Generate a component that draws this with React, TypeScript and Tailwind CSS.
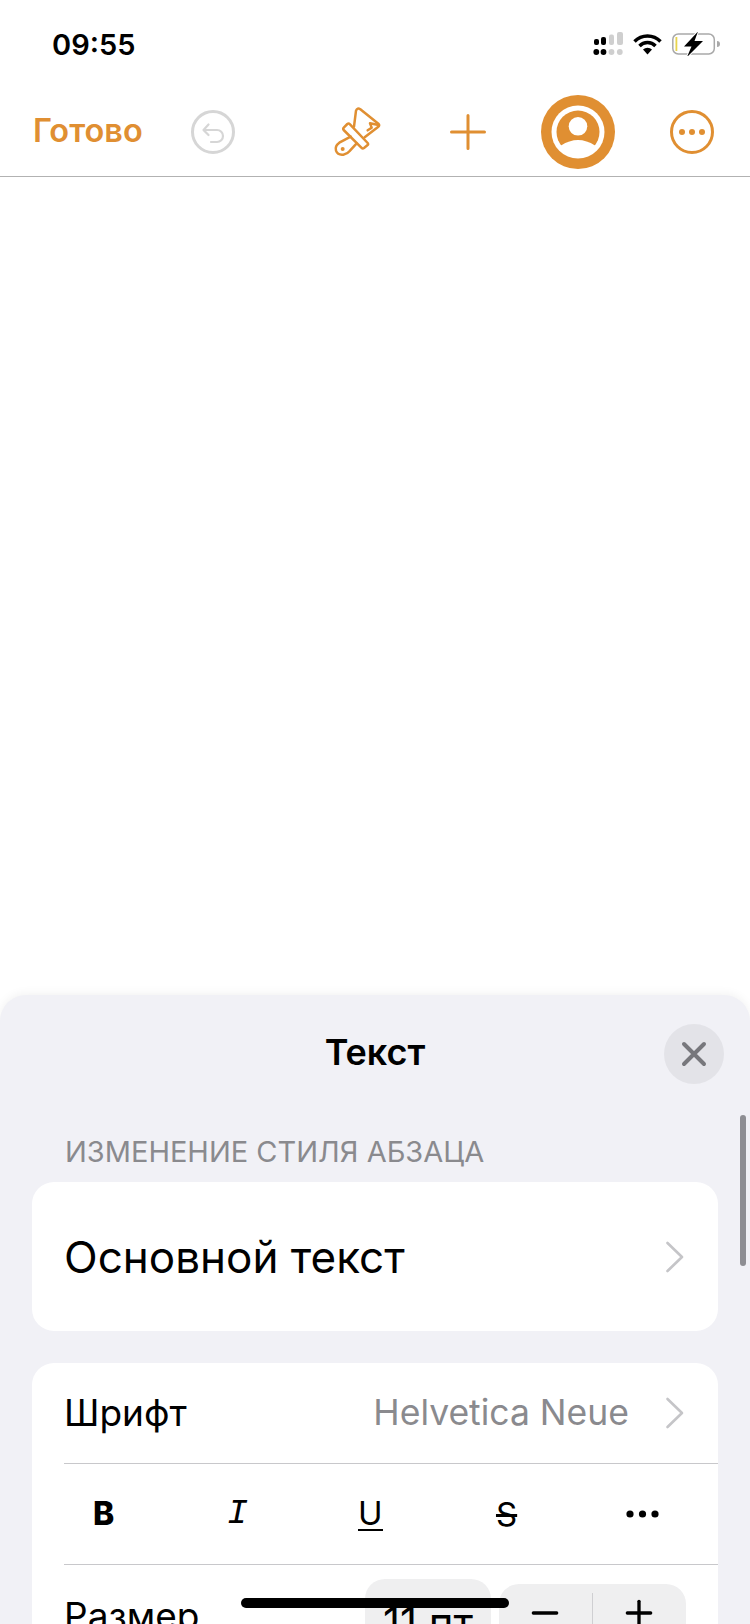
import { Minus, Plus } from 'lucide-react';

const orange = '#e08f32';

function Chevron() {
    return (
        <svg width="20" height="32" viewBox="0 0 20 32" fill="none" stroke="#c5c5c8" strokeWidth="2.6" strokeLinecap="round" strokeLinejoin="round">
            <path d="M2.5 2 L17 16 L2.5 30" />
        </svg>
    );
}

function StatusIcons() {
    return (
        <div className="flex items-center">
            <svg width="30" height="24" viewBox="0 0 30 24">
                <rect x="1" y="7" width="5" height="6" rx="2" fill="#000" />
                <rect x="8" y="5" width="5" height="8" rx="2" fill="#000" />
                <rect x="16" y="2.5" width="5" height="10.5" rx="2" fill="#cfcfcf" />
                <rect x="24" y="0" width="6" height="13" rx="2" fill="#cfcfcf" />
                <circle cx="3.3" cy="20" r="2.9" fill="#000" />
                <circle cx="10.5" cy="20" r="2.9" fill="#000" />
                <circle cx="18.5" cy="20" r="2.9" fill="#cfcfcf" />
                <circle cx="26.8" cy="20" r="2.9" fill="#cfcfcf" />
            </svg>
            <svg className="ml-[10px]" width="29" height="21" viewBox="0 0 29 21" fill="none" stroke="#000" strokeWidth="3.4">
                <path d="M1.5 7.5 A18 18 0 0 1 27.5 7.5" />
                <path d="M6.5 12 A11 11 0 0 1 22.5 12" />
                <path d="M14.5 20.5 L10 15.5 A6.5 6.5 0 0 1 19 15.5 Z" fill="#000" stroke="none" />
            </svg>
            <svg className="ml-[10px]" width="48" height="24" viewBox="0 0 48 24" fill="none">
                <rect x="0.8" y="2" width="41.5" height="20" rx="5.5" stroke="#a9a9a9" strokeWidth="1.5" />
                <rect x="3.5" y="5" width="1.8" height="14" fill="#e8d44d" />
                <path d="M45 9 a3 3 0 0 1 0 6 Z" fill="#a9a9a9" />
                <path d="M12 14.5 L26 -0.5 L22.5 9 H31 L15 25 L19.5 14.5 Z" fill="#fff" stroke="#fff" strokeWidth="2" />
                <path d="M12 14.5 L26 -0.5 L22.5 9 H31 L15 25 L19.5 14.5 Z" fill="#000" />
            </svg>
        </div>
    );
}

function UndoIcon() {
    return (
        <svg width="46" height="46" viewBox="0 0 46 46" fill="none" stroke="#d6d6d6" strokeWidth="3" strokeLinecap="round" strokeLinejoin="round">
            <circle cx="23" cy="23" r="20.5" />
            <path d="M18.5 15.5 L13.5 21 L18.5 26" strokeWidth="2.2" />
            <path d="M14 21 H27 a6 6 0 0 1 0 12 H21" strokeWidth="2.2" />
        </svg>
    );
}

function BrushIcon() {
    return (
        <svg width="80" height="75" viewBox="0 0 240 225" fill="none" stroke={orange} strokeWidth="7.5" strokeLinecap="round" strokeLinejoin="round">
            <path d="M102 98 L108 50 Q112 40 121 46 L176 90 Q180 95 174 99 L134 130" />
            <path d="M172 92 L150 88 L155 101 L143 109" />
            <path d="M72 100 L82 90 Q86 87 90 91 L143 147 Q146 151 142 154 L132 162 Q128 165 124 161 L71 108 Q68 104 72 100 Z" />
            <path d="M92 128 L58 146 Q44 156 48 170 Q53 184 70 182 Q82 180 90 170 L110 148" />
            <circle cx="68" cy="165" r="6" fill={orange} stroke="none" />
        </svg>
    );
}

function PlusIcon() {
    return (
        <svg width="36" height="36" viewBox="0 0 36 36" fill="none" stroke={orange} strokeWidth="3" strokeLinecap="round">
            <path d="M18 1.5 V34.5 M1.5 18 H34.5" />
        </svg>
    );
}

function AvatarIcon() {
    return (
        <svg width="74" height="74" viewBox="0 0 74 74">
            <circle cx="37" cy="37" r="37" fill={orange} />
            <circle cx="37" cy="37" r="26.5" fill="#fff" />
            <circle cx="37" cy="37" r="21.5" fill={orange} />
            <circle cx="37" cy="31.3" r="9.3" fill="#fff" />
            <path d="M20 50.5 Q37 39.5 54 50.5 L54 56 L37 62 L20 56 Z" fill="#fff" />
        </svg>
    );
}

function MoreIcon() {
    return (
        <svg width="46" height="46" viewBox="0 0 46 46" fill="none" stroke={orange} strokeWidth="3">
            <circle cx="23" cy="23" r="20.5" />
            <circle cx="13" cy="23" r="3" fill={orange} stroke="none" />
            <circle cx="23" cy="23" r="3" fill={orange} stroke="none" />
            <circle cx="33" cy="23" r="3" fill={orange} stroke="none" />
        </svg>
    );
}

export default function App() {
    return (
        <div className="relative flex h-[1624px] w-[750px] flex-col overflow-hidden bg-white font-['Inter',sans-serif] text-black">
            <div className="flex h-[88px] shrink-0 items-center justify-between pl-[52px] pr-[30px]">
                <span className="text-[29px] font-semibold leading-none">09:55</span>
                <StatusIcons />
            </div>

            <div className="flex h-[89px] shrink-0 items-center border-b border-[#b2b2b2] pb-[1px] pl-[33px]">
                <span className="w-[112px] text-[32.5px] font-semibold leading-none text-[#e08f32]">Готово</span>
                <div className="ml-[45px]"><UndoIcon /></div>
                <div className="ml-[84px]"><BrushIcon /></div>
                <div className="ml-[50px]"><PlusIcon /></div>
                <div className="ml-[55px]"><AvatarIcon /></div>
                <div className="ml-[54px]"><MoreIcon /></div>
            </div>

            <div className="flex-1" />

            <div className="relative h-[629px] shrink-0 overflow-hidden rounded-t-[26px] bg-[#f1f1f6] shadow-[0_-2px_10px_rgba(0,0,0,0.05)]">
                <div className="absolute right-[4px] top-[120px] h-[151px] w-[6px] rounded-full bg-[#8e8e93]" />

                <div className="grid h-[118px] grid-cols-[1fr_auto_1fr] items-start px-[26px] pt-[29px]">
                    <div />
                    <h1 className="pt-[3px] text-[36px] font-semibold leading-[50px]">Текст</h1>
                    <div className="flex justify-end">
                        <button className="flex h-[60px] w-[60px] items-center justify-center rounded-full bg-[#e3e3e8]">
                            <svg width="26" height="26" viewBox="0 0 26 26" fill="none" stroke="#77777c" strokeWidth="4" strokeLinecap="round">
                                <path d="M3 3 L23 23 M23 3 L3 23" />
                            </svg>
                        </button>
                    </div>
                </div>

                <div className="flex h-[69px] items-start pl-[65px] pt-[23px] text-[29px] leading-[32px] text-[#8a8a8e]">
                    ИЗМЕНЕНИЕ СТИЛЯ АБЗАЦА
                </div>

                <div className="mx-[32px] flex h-[149px] items-center justify-between rounded-[22px] bg-white pl-[32px] pr-[33px]">
                    <span className="text-[44px] leading-none">Основной текст</span>
                    <Chevron />
                </div>

                <div className="mx-[32px] mt-[32px] rounded-[22px] bg-white pl-[32px]">
                    <div className="flex h-[100px] items-center justify-between pr-[33px]">
                        <span className="text-[37px]">Шрифт</span>
                        <div className="flex items-center gap-[36px]">
                            <span className="text-[35.5px] text-[#8a8a8e]">Helvetica Neue</span>
                            <Chevron />
                        </div>
                    </div>
                    <div className="flex h-[101px] items-center border-t border-[#c8c8cb]">
                        <span className="ml-[29px] w-[60px] text-[32px] font-extrabold leading-none">B</span>
                        <span className="ml-[74px] w-[60px] font-['Liberation_Mono',monospace] text-[35px] italic leading-none">I</span>
                        <span className="ml-[71px] border-b-2 border-black text-[33px] leading-[31px]">U</span>
                        <span className="ml-[111px] w-[26px] text-center text-[33px] leading-none line-through">S</span>
                        <svg className="ml-[106px]" width="33" height="8" viewBox="0 0 33 8" fill="#000">
                            <circle cx="4" cy="4" r="3.6" />
                            <circle cx="16.5" cy="4" r="3.6" />
                            <circle cx="29" cy="4" r="3.6" />
                        </svg>
                    </div>
                    <div className="flex h-[110px] items-start border-t border-[#c8c8cb]">
                        <span className="mt-[26px] text-[37px] leading-[50px]">Размер</span>
                        <div className="ml-auto mr-[32px] flex items-start gap-[8px] pt-[14px]">
                            <div className="flex h-[100px] w-[126px] items-start justify-center rounded-[20px] bg-[#efeff0] pt-[19px] text-[42px] leading-[50px]">
                                11 пт
                            </div>
                            <div className="mt-[5px] flex h-[90px] w-[187px] items-start rounded-[20px] bg-[#efeff0] pt-[9px]">
                                <div className="flex w-[91px] justify-center"><Minus size={40} strokeWidth={2} /></div>
                                <div className="ml-[2px] h-[32px] w-[1px] bg-[#cfcfd2]" />
                                <div className="flex w-[91px] justify-center"><Plus size={40} strokeWidth={2} /></div>
                            </div>
                        </div>
                    </div>
                </div>
            </div>

            <div className="absolute left-[241px] top-[1598px] h-[10px] w-[268px] rounded-full bg-black" />
        </div>
    );
}
